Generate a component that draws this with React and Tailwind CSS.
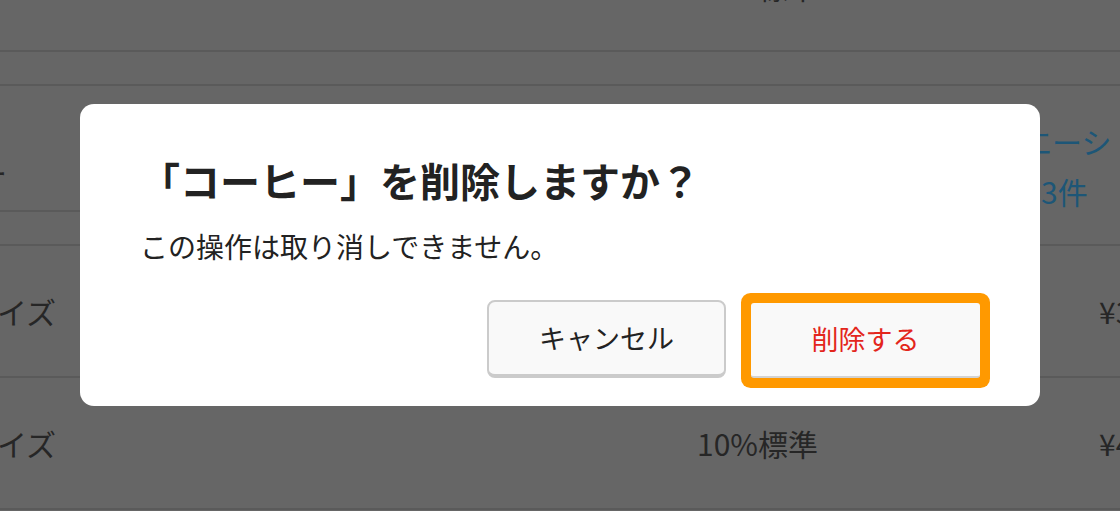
import React from 'react'

const FONT = { fontFamily: '"Noto Sans CJK JP", "Noto Sans", sans-serif' }

function Row({ className = '', children }) {
  return <div className={`flex border-b-2 border-[#5a5a5a] ${className}`}>{children}</div>
}

function ConfirmDialog({ name }) {
  return (
    <div className="absolute inset-0 flex justify-center pt-[104px]">
      <div className="w-[960px] h-[302px] bg-white rounded-[14px] px-[60px] pt-[50px] flex flex-col">
        <h2 className="text-[40px] leading-[52px] font-bold text-[#222]">
          「{name}」を削除しますか？
        </h2>
        <p className="mt-[22px] text-[28px] leading-[36px] text-[#222]">
          この操作は取り消しできません。
        </p>
        <div className="mt-[36px] flex justify-end items-end gap-[25px]">
          <button className="w-[239px] h-[78px] bg-[#f9f9f9] border-2 border-b-[4px] border-[#cbcbcb] rounded-[8px] text-[27px] text-[#222]">
            キャンセル
          </button>
          <button className="w-[229px] h-[75px] bg-[#f9f9f9] border-b-2 border-[#d2d2d2] rounded-[3px] ring-[10px] ring-[#ff9900] text-[27px] text-[#e3261c]">
            削除する
          </button>
        </div>
      </div>
    </div>
  )
}

export default function App() {
  return (
    <div className="relative w-[1120px] h-[511px] overflow-hidden bg-[#666666] text-[#262626] text-[30px]" style={FONT}>
      {/* dimmed table behind the dialog */}
      <div className="flex flex-col">
        <Row className="h-[52px]">
          <div className="w-[697px] shrink-0 -mt-[40px] pl-[8px] whitespace-nowrap">ドリンク</div>
          <div className="w-[402px] shrink-0 -mt-[36px] whitespace-nowrap">10%標準</div>
        </Row>
        <Row className="h-[34px]" />
        <div className="flex border-b-2 border-[#5a5a5a] h-[160px]">
          <div className="w-[500px] shrink-0 flex flex-col">
            <div className="h-[126px] border-b-2 border-[#5a5a5a] pt-[64px] whitespace-nowrap">
              <span className="-ml-[113px] inline-block">コーヒー</span>
            </div>
            <div className="flex-1" />
          </div>
          <div className="w-[612px] shrink-0 pl-[462px] pt-[30px] text-[#1d5677] leading-[50px] whitespace-nowrap overflow-hidden">
            <div>バリエーション</div>
            <div className="pl-[79px]">3件</div>
          </div>
        </div>
        <Row className="h-[132px] items-center">
          <div className="w-[697px] shrink-0 whitespace-nowrap">
            <span className="-ml-[33px] inline-block">サイズ</span>
          </div>
          <div className="w-[402px] shrink-0" />
          <div className="whitespace-nowrap">¥380</div>
        </Row>
        <Row className="h-[132px] items-center">
          <div className="w-[697px] shrink-0 whitespace-nowrap">
            <span className="-ml-[33px] inline-block">サイズ</span>
          </div>
          <div className="w-[402px] shrink-0 whitespace-nowrap">10%標準</div>
          <div className="whitespace-nowrap">¥450</div>
        </Row>
      </div>
      <ConfirmDialog name="コーヒー" />
    </div>
  )
}
